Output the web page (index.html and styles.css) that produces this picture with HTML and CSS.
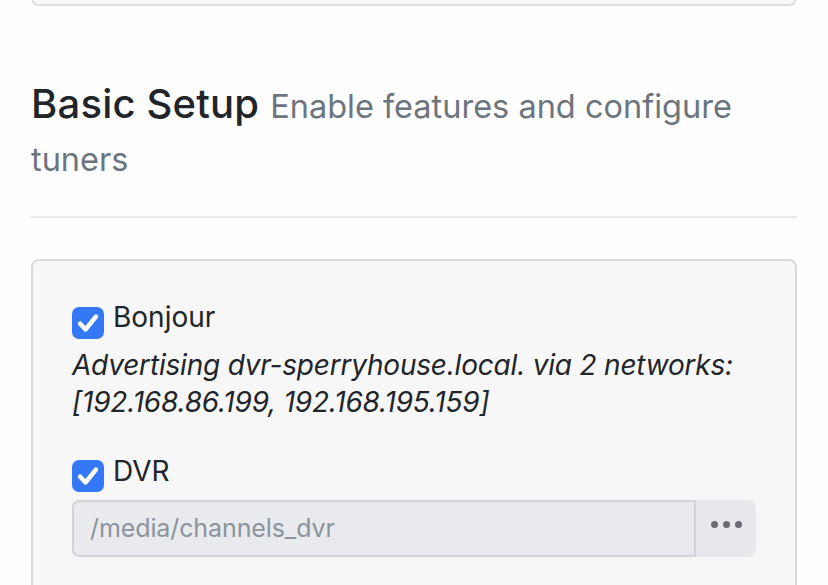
FILE: index.html
```html
<!DOCTYPE html>
<html lang="en">
<head>
<meta charset="utf-8">
<title>Basic Setup</title>
<link rel="stylesheet" href="styles.css">
</head>
<body>
<div class="page">
  <div class="prev-card"></div>
  <h3 class="title">Basic Setup <small>Enable features and configure tuners</small></h3>
  <hr class="rule">
  <div class="card">
    <div class="check">
      <span class="box"><svg viewBox="0 0 32 32" width="32" height="32"><path d="M8 16.5 L13.5 22.5 L24 9.5" fill="none" stroke="#fff" stroke-width="4.4" stroke-linecap="round" stroke-linejoin="round"/></svg></span>
      <span class="label">Bonjour</span>
    </div>
    <p class="desc">Advertising dvr-sperryhouse.local. via 2 networks: [192.168.86.199, 192.168.195.159]</p>
    <div class="check check-dvr">
      <span class="box"><svg viewBox="0 0 32 32" width="32" height="32"><path d="M8 16.5 L13.5 22.5 L24 9.5" fill="none" stroke="#fff" stroke-width="4.4" stroke-linecap="round" stroke-linejoin="round"/></svg></span>
      <span class="label">DVR</span>
    </div>
    <div class="input-group">
      <div class="field">/media/channels_dvr</div>
      <div class="btn"><span class="dot"></span><span class="dot"></span><span class="dot"></span></div>
    </div>
  </div>
</div>
</body>
</html>
```
FILE: styles.css
```css
html, body {
  margin: 0;
  padding: 0;
  background: #fefefe;
}
body {
  font-family: Inter, "Noto Sans", sans-serif;
  color: #212529;
}
.page {
  padding: 0 31px;
}
.prev-card {
  height: 4px;
  margin: 0 1px;
  background: #f8f8f8;
  border: 2px solid #dcdcdc;
  border-top: none;
  border-radius: 0 0 8px 8px;
}
.title {
  margin: 71px 0 0;
  font-size: 40px;
  line-height: 53px;
  font-weight: 500;
  letter-spacing: 0.2px;
  color: #212529;
}
.title small {
  font-size: 32.5px;
  line-height: 1;
  font-weight: 400;
  color: #6c757d;
  letter-spacing: 0;
}
.rule {
  margin: 33px 0 0;
  border: none;
  height: 2px;
  background: #e9e9e9;
}
.card {
  margin-top: 41px;
  height: 400px;
  background: #f7f7f7;
  border: 2px solid #dadada;
  border-radius: 8px;
  padding: 37px 39px 0;
}
.check {
  display: flex;
  align-items: flex-start;
  gap: 9px;
  font-size: 28px;
  line-height: 38px;
}
.box {
  width: 32px;
  height: 32px;
  margin-top: 9px;
  border-radius: 7px;
  background: #3478f6;
  flex: none;
}
.box svg {
  display: block;
}
.desc {
  margin: 8px 0 0;
  font-size: 28px;
  line-height: 37px;
  font-style: italic;
  letter-spacing: -0.2px;
}
.check-dvr {
  margin-top: 31px;
}
.check-dvr .box {
  margin-top: 8px;
}
.input-group {
  display: flex;
  margin-top: 8px;
  width: 684px;
  height: 57px;
}
.field {
  flex: 1;
  box-sizing: border-box;
  background: #e9eaee;
  border: 2px solid #d2d4da;
  border-radius: 7px 0 0 7px;
  padding: 0 16px;
  font-size: 25px;
  line-height: 53px;
  color: #8b939c;
  letter-spacing: -0.1px;
}
.btn {
  width: 60px;
  flex: none;
  background: #e7e8ec;
  border-radius: 0 7px 7px 0;
  display: flex;
  align-items: center;
  justify-content: center;
  gap: 5px;
  padding-bottom: 8px;
  box-sizing: border-box;
}
.dot {
  width: 7px;
  height: 7px;
  border-radius: 50%;
  background: #6a6d73;
}
```
